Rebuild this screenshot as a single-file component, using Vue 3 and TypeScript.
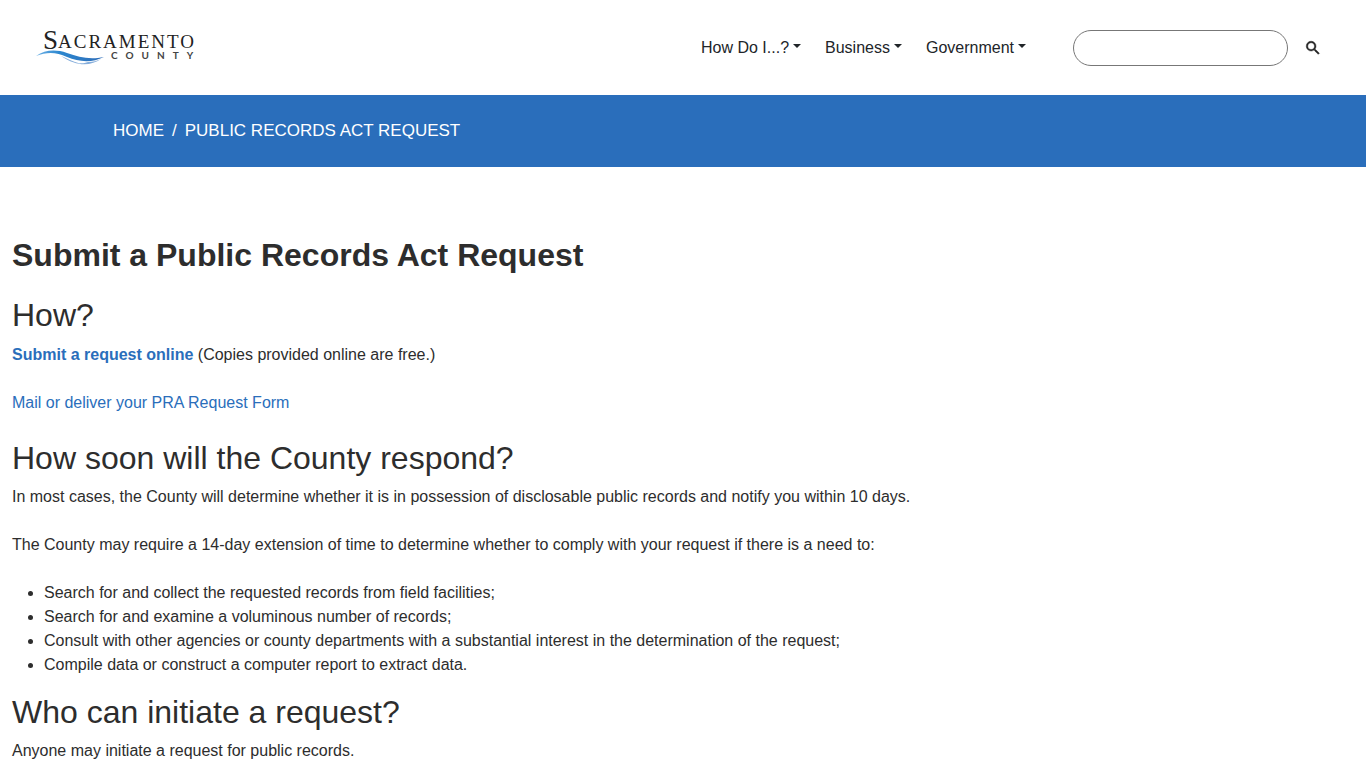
<script setup lang="ts">
const menus: string[] = ['How Do I...?', 'Business', 'Government']

const reasons: string[] = [
  'Search for and collect the requested records from field facilities;',
  'Search for and examine a voluminous number of records;',
  'Consult with other agencies or county departments with a substantial interest in the determination of the request;',
  'Compile data or construct a computer report to extract data.',
]
</script>

<template>
  <header class="site-header">
    <a class="logo" href="#" aria-label="Sacramento County">
      <svg width="164" height="49" viewBox="0 -4 164 49">
        <defs>
          <linearGradient id="wave" x1="0" x2="1" y1="0" y2="0">
            <stop offset="0" stop-color="#6fb2e6" />
            <stop offset="0.35" stop-color="#2b86cf" />
            <stop offset="1" stop-color="#2f6db8" />
          </linearGradient>
        </defs>
        <text class="logo-name" x="7" y="22"><tspan class="logo-initial">S</tspan><tspan x="22" y="21">ACRAMENTO</tspan></text>
        <text class="logo-sub" x="75" y="32">COUNTY</text>
        <path fill="url(#wave)" d="M0 29 C9 23 19 22 31 26 C43 30 53 33 68 30 C56 36 43 35 31 30 C20 25 11 25 0 29Z" />
        <path fill="#86aedb" d="M25 29 C36 33 42 39 52 35 C57 35 61 34 65 32 C55 39 41 40 25 29Z" />
      </svg>
    </a>
    <nav class="menu" aria-label="Main">
      <button v-for="menu in menus" :key="menu" type="button" class="menu-item">{{ menu }}<span class="caret"></span></button>
    </nav>
    <form class="search" role="search" @submit.prevent>
      <input class="search-box" type="text" aria-label="Search" />
      <button class="search-button" type="submit" aria-label="Search">
        <svg width="18" height="18" viewBox="0 0 24 24">
          <path fill="#222" stroke="#222" stroke-width="0.6" d="M15.5 14h-.79l-.28-.27A6.47 6.47 0 0 0 16 9.5 6.5 6.5 0 1 0 9.5 16c1.61 0 3.09-.59 4.23-1.57l.27.28v.79l5 4.99L20.49 19l-4.99-5zm-6 0C7.01 14 5 11.99 5 9.5S7.01 5 9.5 5 14 7.01 14 9.5 11.99 14 9.5 14z" />
        </svg>
      </button>
    </form>
  </header>

  <nav class="breadcrumb" aria-label="Breadcrumb">
    <a href="#">HOME</a>
    <span>/</span>
    <a href="#" aria-current="page">PUBLIC RECORDS ACT REQUEST</a>
  </nav>

  <main class="content">
    <h1>Submit a Public Records Act Request</h1>

    <h2>How?</h2>
    <p><a class="strong" href="#">Submit a request online</a> (Copies provided online are free.)</p>
    <p><a href="#">Mail or deliver your PRA Request Form</a></p>

    <h2>How soon will the County respond?</h2>
    <p>In most cases, the County will determine whether it is in possession of disclosable public records and notify you within 10 days.</p>
    <p>The County may require a 14-day extension of time to determine whether to comply with your request if there is a need to:</p>
    <ul>
      <li v-for="reason in reasons" :key="reason">{{ reason }}</li>
    </ul>

    <h2>Who can initiate a request?</h2>
    <p>Anyone may initiate a request for public records.</p>
  </main>
</template>

<style>
html {
  overflow: hidden;
}

body {
  background: #fff;
  color: #2d2d2d;
  font: 16px/24px "Liberation Sans", Arial, sans-serif;
}
</style>

<style scoped>
.site-header {
  display: flex;
  align-items: center;
  height: 95px;
  padding: 0 36px;
}

.logo {
  display: flex;
  margin-right: auto;
}

.logo-name {
  font-family: "Liberation Serif", serif;
  font-size: 19px;
  letter-spacing: 2px;
  fill: #222;
}

.logo-initial {
  font-size: 27px;
}

.logo-sub {
  font-family: Lato, sans-serif;
  font-size: 10px;
  font-weight: 700;
  letter-spacing: 8px;
  fill: #444;
}

.menu {
  display: flex;
  gap: 24px;
  margin-right: 47px;
}

.menu-item {
  display: flex;
  align-items: center;
  gap: 4px;
  padding: 0;
  border: 0;
  background: none;
  color: #212529;
  font: inherit;
}

.caret {
  border: 4px solid transparent;
  border-top-color: #212529;
  border-bottom: 0;
  margin-bottom: 4px;
}

.search {
  display: flex;
  align-items: center;
  gap: 16px;
}

.search-box {
  box-sizing: border-box;
  width: 215px;
  height: 36px;
  padding: 0 16px;
  border: 1px solid #777;
  border-radius: 18px;
  background: #fff;
  font: inherit;
}

.search-button {
  display: flex;
  padding: 0;
  margin-right: 8px;
  border: 0;
  background: none;
}

.breadcrumb {
  display: flex;
  align-items: center;
  gap: 8px;
  height: 72px;
  padding: 0 113px;
  background: #2a6ebb;
  color: #fff;
  font-size: 17px;
}

.breadcrumb a {
  color: #fff;
  text-decoration: none;
}

.content {
  padding: 69px 12px 0;
}

h1,
h2 {
  margin: 0;
  font-size: 32px;
  line-height: 38px;
  font-weight: 400;
}

h1 {
  margin-bottom: 22px;
  font-weight: 700;
}

h2 {
  margin-bottom: 8px;
}

h1 + h2 {
  margin-bottom: 9px;
}

p {
  margin: 0 0 24px;
}

ul {
  margin: 0 0 16px;
  padding-left: 32px;
}

.content a {
  color: #2a6ebb;
  text-decoration: none;
}

.content .strong {
  font-weight: 700;
}
</style>
